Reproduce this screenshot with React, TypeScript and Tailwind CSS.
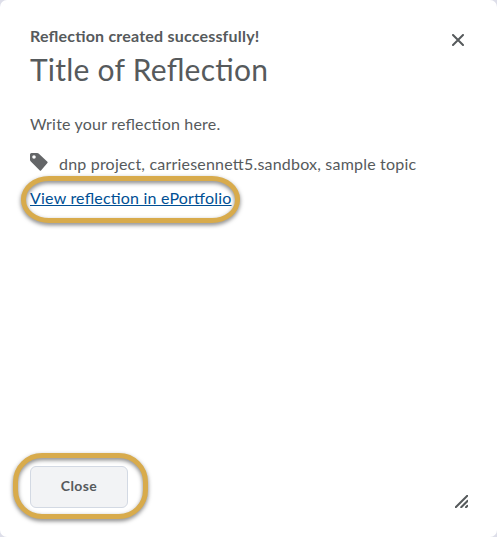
export default function App() {
  return (
    <div className="h-[537px] w-[497px] bg-[#dddee9] font-['Lato',sans-serif] tracking-[0.2px] text-[#565a5c] [font-feature-settings:'liga'_1]">
      <div className="flex h-full flex-col rounded-[7px] bg-white px-[30px] pt-[26px] pb-[29px]">
        <div className="flex justify-between">
          <p className="text-[16px] leading-5 font-bold">Reflection created successfully!</p>
          <button className="mt-2 mr-[3px] h-3 w-3" aria-label="Close dialog">
            <svg viewBox="0 0 12 12" className="h-3 w-3" fill="none" stroke="#565a5c" strokeWidth="2" strokeLinecap="round">
              <path d="M1 1l10 10M11 1L1 11" />
            </svg>
          </button>
        </div>
        <h1 className="mt-[2px] text-[30px] leading-[42px] tracking-[0.24px]">Title of Reflection</h1>
        <p className="mt-[22px] text-[16px] leading-6">Write your reflection here.</p>
        <div className="mt-4 flex items-center text-[16px] leading-6">
          <svg viewBox="0 0 18 18" className="-mt-1 h-[18px] w-[18px]" fill="#646668">
            <path
              fillRule="evenodd"
              d="M0 1.5Q0 0 1.5 0H7.2Q8 0 8.6 .6L17.4 8.8Q18 9.4 17.4 10L11 17.4Q10.4 18 9.8 17.4L.6 8.2Q0 7.6 0 6.8ZM4 2.2a1.8 1.8 0 1 0 0 3.6a1.8 1.8 0 1 0 0-3.6Z"
            />
          </svg>
          <p className="ml-[11px]">dnp project, carriesennett5.sandbox, sample topic</p>
        </div>
        <div className="relative mt-[10px] self-start text-[16px] leading-6">
          <a href="#" className="text-[#004f94] underline">View reflection in ePortfolio</a>
          <span className="pointer-events-none absolute -top-[10px] -left-[9px] h-[47px] w-[219px] rounded-[28px/23px] border-[5px] border-[#d8ab4c] drop-shadow-[0_2px_2px_rgba(0,0,0,0.5)]" />
        </div>
        <div className="mt-auto flex items-end justify-between">
          <div className="relative">
            <button className="block h-[42px] w-[98px] rounded-md border border-[#d3d9e3] bg-[#f2f3f5] pb-[3px] text-[14px] font-bold tracking-[0.4px]">Close</button>
            <span className="pointer-events-none absolute -top-[13px] -left-[17px] h-[66px] w-[135px] rounded-[29px] border-[5px] border-[#d8ab4c] drop-shadow-[0_2px_2px_rgba(0,0,0,0.5)]" />
          </div>
          <svg viewBox="0 0 13 13" className="-mr-px h-[13px] w-[13px]" fill="none" stroke="#565a5c" strokeWidth="2">
            <path d="M.7 12.3l12-12M6.2 12.3l6.5-6.5M11 12.3l1.5-1.5" strokeLinecap="round" />
          </svg>
        </div>
      </div>
    </div>
  )
}
